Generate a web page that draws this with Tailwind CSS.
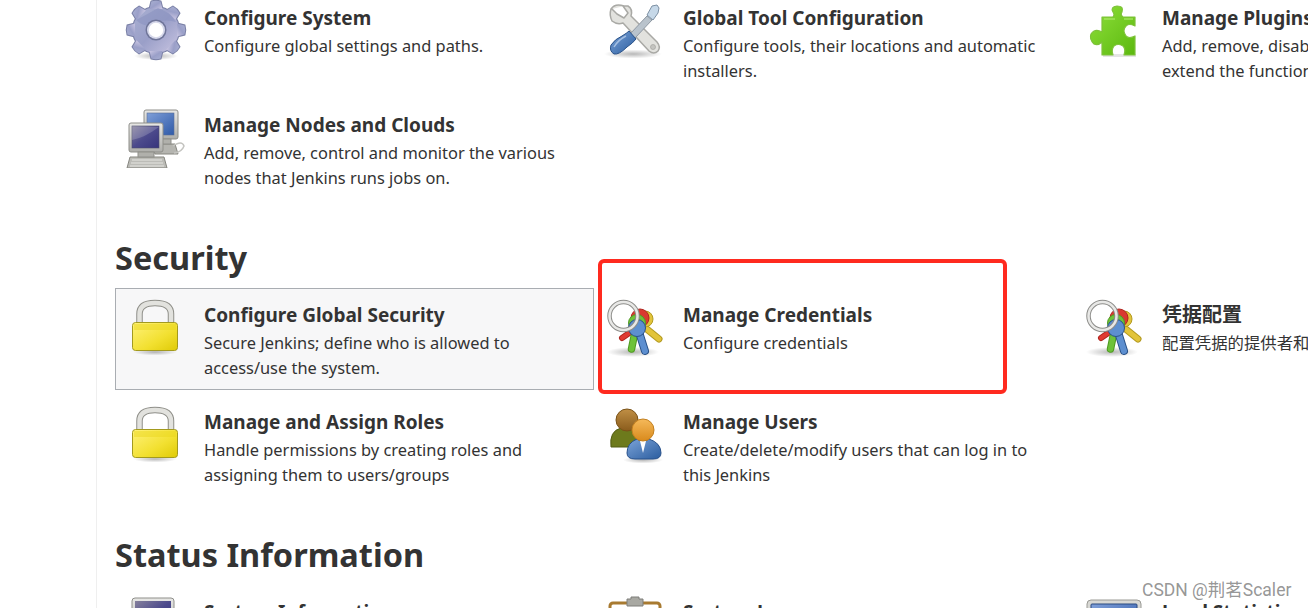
<!DOCTYPE html>
<html lang="en">
<head>
    <meta charset="UTF-8">
    <title>Manage Jenkins</title>
    <script src="https://cdn.jsdelivr.net/npm/@tailwindcss/browser@4"></script>
</head>
<body class="relative h-[608px] overflow-hidden bg-white text-[#333] font-['Noto_Sans','Noto_Sans_CJK_SC',sans-serif]">
    <!-- Shared icons -->
    <svg class="absolute w-0 h-0">
        <defs>
            <linearGradient id="gearFill" x1="0" y1="0" x2="1" y2="1"><stop offset="0" stop-color="#a9b0d2"/><stop offset="0.5" stop-color="#9a9fc8"/><stop offset="1" stop-color="#c9c5e2"/></linearGradient>
            <linearGradient id="lockFill" x1="0" y1="0" x2="1" y2="1"><stop offset="0" stop-color="#fff27a"/><stop offset="0.6" stop-color="#f2e030"/><stop offset="1" stop-color="#dfca06"/></linearGradient>
            <linearGradient id="screenBlue" x1="0" y1="0" x2="1" y2="1"><stop offset="0" stop-color="#7f9fd8"/><stop offset="1" stop-color="#2f5aa8"/></linearGradient>
            <linearGradient id="screenDark" x1="0" y1="0" x2="1" y2="1"><stop offset="0" stop-color="#85809c"/><stop offset="0.5" stop-color="#4c4a8c"/><stop offset="1" stop-color="#37347c"/></linearGradient>
            <linearGradient id="frameGrey" x1="0" y1="0" x2="0" y2="1"><stop offset="0" stop-color="#e8e8e6"/><stop offset="1" stop-color="#aeaeaa"/></linearGradient>
            <linearGradient id="puzzleFill" x1="0" y1="0" x2="1" y2="1"><stop offset="0" stop-color="#8ee03a"/><stop offset="1" stop-color="#5cb80f"/></linearGradient>
            <linearGradient id="handleBlue" x1="0" y1="0" x2="1" y2="1"><stop offset="0" stop-color="#7ba3d8"/><stop offset="1" stop-color="#2b5d9f"/></linearGradient>
            <linearGradient id="headOrange" x1="0" y1="0" x2="0" y2="1"><stop offset="0" stop-color="#f5b95a"/><stop offset="1" stop-color="#d98a1c"/></linearGradient>
            <linearGradient id="headBrown" x1="0" y1="0" x2="0" y2="1"><stop offset="0" stop-color="#c08f45"/><stop offset="1" stop-color="#8a5c1c"/></linearGradient>
            <radialGradient id="shadow"><stop offset="0" stop-color="#000" stop-opacity="0.28"/><stop offset="1" stop-color="#000" stop-opacity="0"/></radialGradient>
            <path id="gearTooth" d="M-6.5 -21 L-4.6 -28.5 Q0 -30 4.6 -28.5 L6.5 -21 Z"/>
            <g id="gearShape">
                <circle r="23"/>
                <use href="#gearTooth"/>
                <use href="#gearTooth" transform="rotate(45)"/>
                <use href="#gearTooth" transform="rotate(90)"/>
                <use href="#gearTooth" transform="rotate(135)"/>
                <use href="#gearTooth" transform="rotate(180)"/>
                <use href="#gearTooth" transform="rotate(225)"/>
                <use href="#gearTooth" transform="rotate(270)"/>
                <use href="#gearTooth" transform="rotate(315)"/>
            </g>
            <symbol id="iconGear" viewBox="0 0 64 64">
                <ellipse cx="32" cy="59" rx="22" ry="4" fill="url(#shadow)"/>
                <g transform="translate(32 33)">
                    <use href="#gearShape" fill="#7a80a6" stroke="#7a80a6" stroke-width="2"/>
                    <use href="#gearShape" fill="url(#gearFill)"/>
                    <path d="M-20 -10 Q-8 -16 2 -22 Q14 -18 20 -8 Q8 -12 -2 -6 Q-12 -2 -20 -10 Z" fill="#8b93bf" opacity="0.6"/>
                    <circle r="10.5" fill="#6f7599"/>
                    <circle r="9" fill="#d6d8ea"/>
                    <circle r="7.2" fill="#fff"/>
                </g>
            </symbol>
            <symbol id="iconComputers" viewBox="0 0 64 64">
                <path d="M27 40 L51 40 L54 50 L31 50 Z" fill="#b5b5b0" stroke="#85857f"/>
                <rect x="20" y="6" width="34" height="29" rx="2" fill="url(#frameGrey)" stroke="#8f8f8a"/>
                <rect x="23" y="9" width="27" height="22" fill="url(#screenBlue)" stroke="#5a6f96" stroke-width="0.6"/>
                <rect x="31" y="35" width="16" height="5" fill="#b0b0ab" stroke="#8f8f8a"/>
                <path d="M49 42 Q58 36 60 42 Q58 48 50 49" fill="none" stroke="#c4c4c0" stroke-width="1.5"/>
                <path d="M3 64 L6 53 L40 53 L43 64 Z" fill="#bcbcb7" stroke="#85857f"/>
                <path d="M8 56 L38 56 M7 59 L39 59 M6 62 L40 62" stroke="#e6e6e2" stroke-width="1"/>
                <rect x="5" y="19" width="34" height="29" rx="2" fill="url(#frameGrey)" stroke="#8f8f8a"/>
                <rect x="8" y="22" width="27" height="22" fill="url(#screenDark)" stroke="#4d4d6b" stroke-width="0.6"/>
                <path d="M8 36 Q20 34 35 23 L8 22 Z" fill="#fff" opacity="0.18"/>
                <rect x="14" y="48" width="16" height="5" fill="#b0b0ab" stroke="#8f8f8a"/>
            </symbol>
            <symbol id="iconTools" viewBox="0 0 64 64">
                <ellipse cx="30" cy="57" rx="29" ry="4.5" fill="url(#shadow)"/>
                <path d="M21 9 Q12 6 8 12 Q6 18 9 24 Q14 28 20 26 L46 54 Q51 58 55 54 Q58 50 54 45 L28 19 Q30 12 25 9 L20 9 L25 16 L21 21 L14 17 L9 12" fill="#e2e2de" stroke="#a9a9a5" stroke-width="1.5" stroke-linejoin="round"/>
                <circle cx="50" cy="50" r="2.5" fill="#c4c4c0" stroke="#a3a39f" stroke-width="0.7"/>
                <path d="M44 19 L27 37 L32 41 L49 23 Z" fill="#b9c3cc" stroke="#8f99a3" stroke-width="1"/>
                <path d="M49 9 L54 8 L56 11 L55 16 L50 23 L44 18 Z" fill="#c6d8e8" stroke="#7d90a3" stroke-width="1"/>
                <path d="M26 34 L33 42 Q30 46 24 50 Q16 58 11 57 Q6 54 8 48 Q12 42 19 39 Q24 36 26 34 Z" fill="url(#handleBlue)" stroke="#2a5288" stroke-width="1"/>
                <path d="M23 39 Q15 43 11 50" fill="none" stroke="#b6cdea" stroke-width="1.5" opacity="0.8"/>
            </symbol>
            <symbol id="iconPuzzle" viewBox="0 0 64 64">
                <rect x="21" y="57" width="33" height="3" fill="#000" opacity="0.1"/>
                <path d="M20 20 L31 20 Q33 18 31 15 Q28 10 35 9 Q42 9 40 15 Q38 18 41 20 L53 20 L53 29 Q47 26 44 29 Q40 33 44 39 Q47 42 53 39 L53 58 L42 58 Q44 52 41 49 Q36 46 32 49 Q29 53 31 58 L20 58 L20 45 Q16 49 12 47 Q7 42 9 37 Q13 31 20 35 Z" fill="url(#puzzleFill)" stroke="#7ec23a" stroke-width="1.2" stroke-linejoin="round"/>
                <path d="M22 22 L33 22 M42 22 L51 22" stroke="#b7ee78" stroke-width="1.2"/>
            </symbol>
            <symbol id="iconLock" viewBox="0 0 64 64">
                <ellipse cx="31" cy="58" rx="22" ry="3.5" fill="url(#shadow)"/>
                <path d="M15.5 29 L15.5 20 Q15.5 9 31 9 Q47 9 47 20 L47 29" fill="none" stroke="#8f8f89" stroke-width="6.5"/>
                <path d="M15.5 29 L15.5 20 Q15.5 9 31 9 Q47 9 47 20 L47 29" fill="none" stroke="#e2e2de" stroke-width="4.5"/>
                <rect x="8.5" y="28.5" width="45" height="28" rx="3" fill="url(#lockFill)" stroke="#a39a1e"/>
                <path d="M10 30 L52 30 L52 36 L10 36 Z" fill="#e8d418" opacity="0.45"/>
            </symbol>
            <symbol id="iconKeys" viewBox="0 0 64 64">
                <ellipse cx="30" cy="58" rx="26" ry="5" fill="url(#shadow)"/>
                <path d="M40 32 L56 45" stroke="#b39a20" stroke-width="7" stroke-linecap="round"/>
                <path d="M40 32 L56 45" stroke="#e2c43a" stroke-width="5" stroke-linecap="round"/>
                <circle cx="42" cy="25" r="8" fill="#e2c43a" stroke="#b39a20"/>
                <path d="M32 35 L19 44" stroke="#b0241e" stroke-width="6" stroke-linecap="round"/>
                <path d="M32 35 L19 44" stroke="#e03a32" stroke-width="4" stroke-linecap="round"/>
                <circle cx="37" cy="24" r="9" fill="#d93a30" stroke="#b0241e"/>
                <path d="M32 38 L28.5 55" stroke="#4f9a22" stroke-width="7.5" stroke-linecap="round"/>
                <path d="M32 38 L28.5 55" stroke="#6ec23a" stroke-width="5.5" stroke-linecap="round"/>
                <circle cx="34" cy="29" r="8.5" fill="#6ec23a" stroke="#4f9a22"/>
                <path d="M36 38 L42 57" stroke="#2a5288" stroke-width="8" stroke-linecap="round"/>
                <path d="M36 38 L42 57" stroke="#5d8fd0" stroke-width="6" stroke-linecap="round"/>
                <circle cx="34" cy="34" r="8.5" fill="#5d8fd0" stroke="#2a5288"/>
                <circle cx="20.5" cy="22" r="14" fill="none" stroke="#8d8d8a" stroke-width="4.5"/>
                <circle cx="20.5" cy="22" r="14" fill="none" stroke="#e8e8e6" stroke-width="2.5"/>
            </symbol>
            <symbol id="iconUsers" viewBox="0 0 64 64">
                <ellipse cx="40" cy="59" rx="20" ry="3.5" fill="url(#shadow)"/>
                <path d="M8 46 Q6 30 18 27 Q24 31 30 27 Q38 30 38 46 Z" fill="#6d7a1c" stroke="#525c14"/>
                <circle cx="24" cy="19" r="11" fill="url(#headBrown)" stroke="#7a5218"/>
                <path d="M24 52 Q24 42 34 38 Q40 43 46 38 Q58 42 58 52 Q58 58 50 58 L32 58 Q24 58 24 52 Z" fill="url(#handleBlue)" stroke="#27508a"/>
                <path d="M37 40 L40 52 L43 40 Z" fill="#fff"/>
                <circle cx="40" cy="29" r="11" fill="url(#headOrange)" stroke="#c28020"/>
            </symbol>
            <symbol id="iconSysInfo" viewBox="0 0 64 64">
                <rect x="8" y="7" width="42" height="36" rx="3" fill="url(#frameGrey)" stroke="#8f8f8a"/>
                <rect x="11" y="10" width="36" height="28" fill="url(#screenDark)"/>
            </symbol>
            <symbol id="iconLog" viewBox="0 0 64 64">
                <rect x="7" y="12" width="50" height="46" rx="3" fill="#fff" stroke="#a87a30" stroke-width="3"/>
                <path d="M24 12 L24 8 L28 8 L28 6 L36 6 L36 8 L40 8 L40 15 L24 15 Z" fill="#a8a8a2" stroke="#7f7f7a"/>
            </symbol>
            <symbol id="iconLoad" viewBox="0 0 64 64">
                <rect x="5" y="9" width="54" height="44" rx="4" fill="#d8d8d4" stroke="#9a9a95"/>
                <rect x="9" y="13" width="46" height="36" rx="1" fill="url(#screenBlue)" stroke="#2a4a80"/>
            </symbol>
        </defs>
    </svg>

    <div class="flex h-full">
        <!-- Side panel -->
        <div class="w-[97px] shrink-0 border-r border-[#efefef]"></div>

        <!-- Main content -->
        <main class="pl-[18px] -mt-[9px]">
            <div class="grid grid-cols-[479px_479px_479px] gap-y-[5px]">
                <a class="flex h-[102px] border border-transparent pl-[8px] pt-[5px]">
                    <svg class="w-16 h-16 shrink-0"><use href="#iconGear"/></svg>
                    <div class="ml-4 w-[370px] pt-[8px]">
                        <h3 class="text-[19px] leading-[26px] font-bold">Configure System</h3>
                        <p class="text-[16.4px] leading-[25px] mt-[2px]">Configure global settings and paths.</p>
                    </div>
                </a>
                <a class="flex h-[102px] border border-transparent pl-[8px] pt-[5px]">
                    <svg class="w-16 h-16 shrink-0"><use href="#iconTools"/></svg>
                    <div class="ml-4 w-[370px] pt-[8px]">
                        <h3 class="text-[19px] leading-[26px] font-bold">Global Tool Configuration</h3>
                        <p class="text-[16.4px] leading-[25px] mt-[2px]">Configure tools, their locations and automatic installers.</p>
                    </div>
                </a>
                <a class="flex h-[102px] border border-transparent pl-[8px] pt-[5px]">
                    <svg class="w-16 h-16 shrink-0"><use href="#iconPuzzle"/></svg>
                    <div class="ml-4 w-[370px] pt-[8px]">
                        <h3 class="text-[19px] leading-[26px] font-bold">Manage Plugins</h3>
                        <p class="text-[16.4px] leading-[25px] mt-[2px]">Add, remove, disable or enable plugins that can extend the functionality of Jenkins.</p>
                    </div>
                </a>
                <a class="flex h-[102px] border border-transparent pl-[8px] pt-[5px]">
                    <svg class="w-16 h-16 shrink-0"><use href="#iconComputers"/></svg>
                    <div class="ml-4 w-[370px] pt-[8px]">
                        <h3 class="text-[19px] leading-[26px] font-bold">Manage Nodes and Clouds</h3>
                        <p class="text-[16.4px] leading-[25px] mt-[2px]">Add, remove, control and monitor the various nodes that Jenkins runs jobs on.</p>
                    </div>
                </a>
            </div>

            <h2 class="h-[88px] pt-[33px] text-[32.5px] leading-[50px] font-bold">Security</h2>
            <div class="grid grid-cols-[479px_479px_479px] gap-y-[5px]">
                <a class="flex h-[102px] border border-[#a9adb2] bg-[#f7f7f8] pl-[8px] pt-[5px]">
                    <svg class="w-16 h-16 shrink-0"><use href="#iconLock"/></svg>
                    <div class="ml-4 w-[370px] pt-[8px]">
                        <h3 class="text-[19px] leading-[26px] font-bold">Configure Global Security</h3>
                        <p class="text-[16.4px] leading-[25px] mt-[2px]">Secure Jenkins; define who is allowed to access/use the system.</p>
                    </div>
                </a>
                <a class="flex h-[102px] border border-transparent pl-[8px] pt-[5px]">
                    <svg class="w-16 h-16 shrink-0"><use href="#iconKeys"/></svg>
                    <div class="ml-4 w-[370px] pt-[8px]">
                        <h3 class="text-[19px] leading-[26px] font-bold">Manage Credentials</h3>
                        <p class="text-[16.4px] leading-[25px] mt-[2px]">Configure credentials</p>
                    </div>
                </a>
                <a class="flex h-[102px] border border-transparent pl-[8px] pt-[5px]">
                    <svg class="w-16 h-16 shrink-0"><use href="#iconKeys"/></svg>
                    <div class="ml-4 w-[370px] pt-[8px]">
                        <h3 class="text-[20px] leading-[26px] font-bold">凭据配置</h3>
                        <p class="text-[16.4px] leading-[25px] mt-[2px]">配置凭据的提供者和类型</p>
                    </div>
                </a>
                <a class="flex h-[102px] border border-transparent pl-[8px] pt-[5px]">
                    <svg class="w-16 h-16 shrink-0"><use href="#iconLock"/></svg>
                    <div class="ml-4 w-[370px] pt-[8px]">
                        <h3 class="text-[19px] leading-[26px] font-bold">Manage and Assign Roles</h3>
                        <p class="text-[16.4px] leading-[25px] mt-[2px]">Handle permissions by creating roles and assigning them to users/groups</p>
                    </div>
                </a>
                <a class="flex h-[102px] border border-transparent pl-[8px] pt-[5px]">
                    <svg class="w-16 h-16 shrink-0"><use href="#iconUsers"/></svg>
                    <div class="ml-4 w-[370px] pt-[8px]">
                        <h3 class="text-[19px] leading-[26px] font-bold">Manage Users</h3>
                        <p class="text-[16.4px] leading-[25px] mt-[2px]">Create/delete/modify users that can log in to this Jenkins</p>
                    </div>
                </a>
            </div>

            <h2 class="h-[88px] pt-[33px] text-[32.5px] leading-[50px] font-bold">Status Information</h2>
            <div class="grid grid-cols-[479px_479px_479px] gap-y-[5px]">
                <a class="flex h-[102px] border border-transparent pl-[8px] pt-[5px]">
                    <svg class="w-16 h-16 shrink-0"><use href="#iconSysInfo"/></svg>
                    <div class="ml-4 w-[370px] pt-[8px]">
                        <h3 class="text-[19px] leading-[26px] font-bold">System Information</h3>
                    </div>
                </a>
                <a class="flex h-[102px] border border-transparent pl-[8px] pt-[5px]">
                    <svg class="w-16 h-16 shrink-0"><use href="#iconLog"/></svg>
                    <div class="ml-4 w-[370px] pt-[8px]">
                        <h3 class="text-[19px] leading-[26px] font-bold">System Log</h3>
                    </div>
                </a>
                <a class="flex h-[102px] border border-transparent pl-[8px] pt-[5px]">
                    <svg class="w-16 h-16 shrink-0"><use href="#iconLoad"/></svg>
                    <div class="ml-4 w-[370px] pt-[8px]">
                        <h3 class="text-[19px] leading-[26px] font-bold">Load Statistics</h3>
                    </div>
                </a>
            </div>
        </main>
    </div>

    <!-- Annotation and watermark painted over the screenshot -->
    <div class="absolute left-[598px] top-[259px] w-[409px] h-[135px] rounded-[6px] border-[4px] border-[#ff2a1f]"></div>
    <div class="absolute left-[1142px] top-[579px] text-[17.5px] leading-[22px] text-[#8a8a8a]/90 font-['Roboto','Noto_Sans_CJK_SC',sans-serif]">CSDN @荆茗Scaler</div>
</body>
</html>
